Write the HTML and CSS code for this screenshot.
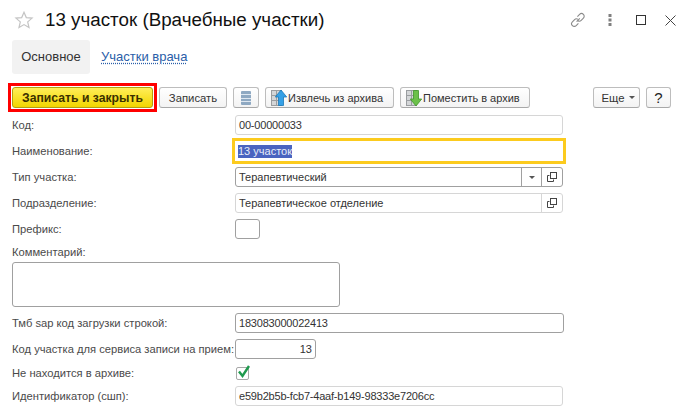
FILE: index.html
```html
<!DOCTYPE html>
<html lang="ru">
<head>
<meta charset="utf-8">
<title>13 участок (Врачебные участки)</title>
<link rel="stylesheet" href="styles.css">
</head>
<body>
<header class="titlebar">
  <svg class="star" width="20" height="20" viewBox="0 0 20 20"><path d="M10 2.200l2.300 5.400 5.800.5-4.400 3.800 1.300 5.700-5-3-5 3 1.300-5.700L1.900 8.100l5.800-.5z" fill="#fff" stroke="#c4c4c4" stroke-width="1.200"/></svg>
  <h1 class="title">13 участок (Врачебные участки)</h1>
  <div class="winbtns">
    <svg width="16" height="16" viewBox="0 0 16 16" fill="none" stroke="#8a8a8a" stroke-width="1.100"><path d="M6.600 9.600l3.200-3.200M7.400 4.600l2.200-2.200a2.600 2.600 0 0 1 3.800 3.800l-2.200 2.200a2.600 2.600 0 0 1-3.200.4M8.400 11.400l-2.200 2.200a2.600 2.600 0 0 1-3.800-3.800l2.200-2.200a2.600 2.600 0 0 1 3.200-.4"/></svg>
    <svg width="4" height="12" viewBox="0 0 4 12" fill="#808080"><rect x="0.500" y="0" width="3" height="3"/><rect x="0.500" y="4.500" width="3" height="3"/><rect x="0.500" y="9" width="3" height="3"/></svg>
    <svg width="10" height="10" viewBox="0 0 10 10" fill="none" stroke="#333"><rect x="0.500" y="0.500" width="9" height="9"/></svg>
    <svg width="11" height="11" viewBox="0 0 11 11" fill="none" stroke="#444"><path d="M.5.5l10 10M10.500.5l-10 10"/></svg>
  </div>
</header>

<nav class="tabs">
  <span class="tab active">Основное</span>
  <a class="tab-link" href="#">Участки врача</a>
</nav>

<div class="cmdbar">
  <div class="highlight"><button class="btn primary">Записать и закрыть</button></div>
  <button class="btn save">Записать</button>
  <button class="btn listbtn" aria-label="Список">
    <svg width="10" height="14" viewBox="0 0 10 14"><rect x="0" y="0" width="10" height="14" rx="1" fill="#8fa9c2"/><path d="M0 3.500h10M0 7.500h10M0 10.500h10" stroke="#dfe8f1"/></svg>
  </button>
  <button class="btn archive out">
    <svg width="16" height="18" viewBox="0 0 16 18"><rect x="0.500" y="1.500" width="10" height="15" fill="#d4d6d8" stroke="#9a9da0"/><path d="M1 6.500h9M1 11.500h9M5.500 2v14" stroke="#9a9da0"/><path d="M10 1l5.700 7h-3.200v8.500h-5V8H4.300z" fill="#35a0e6" stroke="#1b78b8" stroke-width=".8"/></svg>
    Извлечь из архива
  </button>
  <button class="btn archive in">
    <svg width="16" height="18" viewBox="0 0 16 18"><rect x="0.500" y="1.500" width="10" height="15" fill="#d4d6d8" stroke="#9a9da0"/><path d="M1 6.500h9M1 11.500h9M5.500 2v14" stroke="#9a9da0"/><path d="M7.500 1.500h5V10h3.200L10 17 4.300 10h3.200z" fill="#6cc04a" stroke="#3f962a" stroke-width=".8"/></svg>
    Поместить в архив
  </button>
  <div class="spacer"></div>
  <button class="btn more">Еще <span class="caret"></span></button>
  <button class="btn help">?</button>
</div>

<main class="form">
  <div class="row"><span class="label">Код:</span><div class="field light wide digits">00-00000033</div></div>
  <div class="row"><span class="label">Наименование:</span><div class="field wide focus"><span class="sel">13 участок</span></div></div>
  <div class="row"><span class="label">Тип участка:</span>
    <div class="field wide dark combo">
      <span class="val">Терапевтический</span>
      <span class="sbtn dark-sep drop"><span class="caret"></span></span>
      <span class="sbtn dark-sep"><svg class="open" width="10" height="10" viewBox="0 0 10 10" fill="none" stroke="#444"><path d="M2.500 3.500h-2v6h6v-2"/><rect x="3.500" y="0.500" width="6" height="6"/></svg></span>
    </div>
  </div>
  <div class="row"><span class="label">Подразделение:</span>
    <div class="field wide light combo">
      <span class="val">Терапевтическое отделение</span>
      <span class="sbtn"><svg class="open" width="10" height="10" viewBox="0 0 10 10" fill="none" stroke="#444"><path d="M2.500 3.500h-2v6h6v-2"/><rect x="3.500" y="0.500" width="6" height="6"/></svg></span>
    </div>
  </div>
  <div class="row"><span class="label">Префикс:</span><div class="field dark prefix"></div></div>
  <div class="comment">
    <span class="label comment-label">Комментарий:</span>
    <div class="field dark area"></div>
  </div>
  <div class="row"><span class="label">Тмб sap код загрузки строкой:</span><div class="field dark wide1 digits">183083000022413</div></div>
  <div class="row"><span class="label">Код участка для сервиса записи на прием:</span><div class="field dark num">13</div></div>
  <div class="row check-row"><span class="label">Не находится в архиве:</span>
    <span class="check"><svg width="14" height="15" viewBox="0 0 14 15" fill="none"><path d="M2 6.500l3.500 4.500L12 1" stroke="#1f9a4e" stroke-width="2.400"/></svg></span>
  </div>
  <div class="row"><span class="label">Идентификатор (сшп):</span><div class="field light wide digits">e59b2b5b-fcb7-4aaf-b149-98333e7206cc</div></div>
</main>
</body>
</html>
```

FILE: styles.css
```css
* { box-sizing: border-box; }
html, body { margin: 0; padding: 0; }
body {
  width: 691px;
  height: 418px;
  overflow: hidden;
  background: #fff;
  font: 11.2px/14px "Liberation Sans", Arial, sans-serif;
  color: #333;
}
.titlebar {
  display: flex;
  align-items: center;
  height: 40px;
  padding: 0 15px 0 14px;
}
.star { flex: none; margin-right: 11px; }
.title {
  margin: 0;
  font-size: 18.800px;
  font-weight: normal;
  color: #111;
  flex: 1;
  white-space: nowrap;
}
.winbtns { display: flex; align-items: center; flex: none; }
.winbtns svg:nth-child(1) { margin-right: 22px; }
.winbtns svg:nth-child(2) { margin-right: 24px; }
.winbtns svg:nth-child(3) { margin-right: 19px; }

.tabs { display: flex; align-items: center; height: 34px; padding-left: 12px; font-size: 13px; }
.tab {
  display: flex;
  align-items: center;
  justify-content: center;
  width: 78px;
  height: 34px;
  background: #f2f2f2;
  border-radius: 3px;
}
.tab-link {
  margin-left: 11px;
  color: #2a5ea8;
  text-decoration: underline dotted #2a5ea8;
  text-underline-offset: 2px;
}

.cmdbar {
  display: flex;
  align-items: center;
  height: 29px;
  margin-top: 9px;
  padding: 0 20px 0 8px;
}
.highlight { border: 3px solid #f00; padding: 1px; height: 29px; margin-right: 2px; }
.btn {
  display: inline-flex;
  align-items: center;
  justify-content: center;
  height: 21px;
  padding: 0;
  font: inherit;
  font-size: 11.300px;
  white-space: nowrap;
  color: #333;
  border: 1px solid #bdbdbd;
  border-bottom-color: #a8a8a8;
  border-radius: 3px;
  background: linear-gradient(#fff, #f3f3f3);
}
.primary {
  width: 141px;
  font-size: 12.200px;
  font-weight: bold;
  color: #3a3000;
  border-color: #b49e10;
  background: linear-gradient(#ffee58, #f2d500);
}
.save { width: 68px; }
.listbtn { width: 26px; margin-left: 6px; }
.archive { justify-content: flex-start; gap: 1px; margin-left: 6px; padding-left: 5px; font-size: 11px; }
.out { width: 129px; }
.in { width: 130px; }
.spacer { flex: 1; }
.more { width: 47px; gap: 4px; padding-left: 3px; }
.help { width: 25px; margin-left: 6px; font-size: 15px; color: #222; }
.caret {
  display: inline-block;
  width: 0;
  height: 0;
  border-left: 3px solid transparent;
  border-right: 3px solid transparent;
  border-top: 3px solid #555;
}

.form {
  display: flex;
  flex-direction: column;
  gap: 6px;
  margin-top: 3px;
  padding-left: 12px;
}
.row { display: flex; align-items: center; height: 20px; }
.label { flex: none; width: 223px; color: #4a4a4a; white-space: nowrap; }
.field {
  display: flex;
  align-items: center;
  height: 20px;
  padding: 0 3px;
  background: #fff;
  border: 1px solid #ccc;
  border-radius: 3px;
  color: #333;
  font-size: 11px;
  white-space: nowrap;
}
.digits { letter-spacing: -.2px; }
.light { border-color: #d6d6d6; }
.dark { border-color: #a0a0a0; }
.wide { width: 328px; }
.wide1 { width: 329px; }
.focus {
  border: 3px solid #fccb1e;
  border-radius: 0;
  width: 334px;
  height: 26px;
  margin-left: -3px;
  padding: 0 3px;
  flex: none;
}
.sel { background: #4a64c0; color: #e8ecf8; line-height: 13px; }
.combo { padding: 0 0 0 3px; }
.val { flex: 1; }
.sbtn {
  display: flex;
  align-items: center;
  justify-content: center;
  flex: none;
  width: 21px;
  height: 100%;
  border-left: 1px solid #d6d6d6;
}
.drop { width: 20px; }
.dark-sep { border-left-color: #a0a0a0; }
.prefix { width: 25px; }
.comment { display: flex; flex-direction: column; }
.comment-label { margin-bottom: 3px; }
.area { width: 328px; height: 45px; }
.num { width: 81px; justify-content: flex-end; }
.check-row { height: 15px; }
.check {
  display: block;
  position: relative;
  width: 13px;
  height: 13px;
  margin: 2px 0 0 1px;
  border: 1px solid #a8a8a8;
  border-radius: 2px;
}
.check svg { position: absolute; left: 0; top: -3px; }
```
